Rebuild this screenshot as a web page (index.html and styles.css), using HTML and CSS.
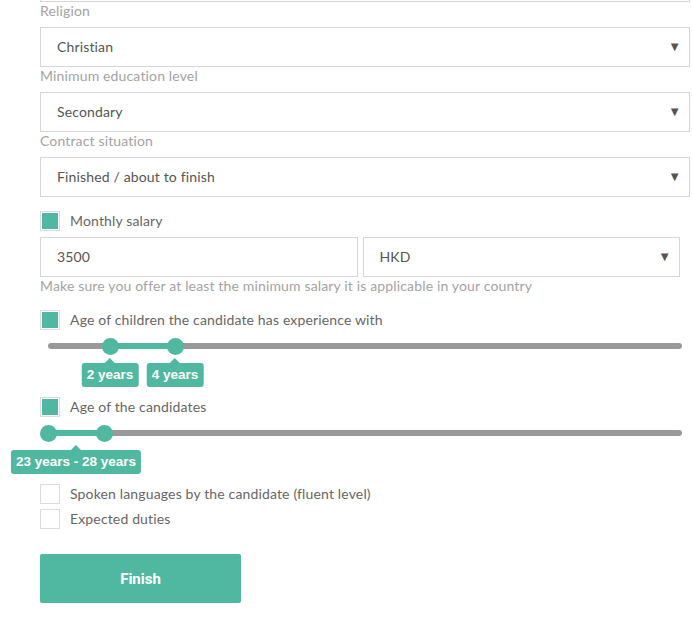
FILE: index.html
```html
<!DOCTYPE html>
<html>
<head>
<meta charset="utf-8">
<link rel="stylesheet" href="styles.css">
</head>
<body>
<form class="form">
  <div class="box prev-box"></div>
  <div class="label">Religion</div>
  <div class="box select"><span>Christian</span><span class="arrow">▼</span></div>
  <div class="label">Minimum education level</div>
  <div class="box select"><span>Secondary</span><span class="arrow">▼</span></div>
  <div class="label">Contract situation</div>
  <div class="box select"><span>Finished / about to finish</span><span class="arrow">▼</span></div>

  <div class="check-row first-check"><span class="check on"></span><span class="check-text">Monthly salary</span></div>
  <div class="pair">
    <div class="box input"><span>3500</span></div>
    <div class="box select"><span>HKD</span><span class="arrow">▼</span></div>
  </div>
  <div class="label hint">Make sure you offer at least the minimum salary it is applicable in your country</div>

  <div class="check-row after-hint"><span class="check on"></span><span class="check-text">Age of children the candidate has experience with</span></div>
  <div class="slider">
    <div class="track"></div>
    <div class="fill" style="left:62px;width:65px"></div>
    <div class="handle" style="left:62px"></div>
    <div class="handle" style="left:127px"></div>
    <div class="tip" style="left:62px">2 years</div>
    <div class="tip" style="left:127px">4 years</div>
  </div>

  <div class="check-row"><span class="check on"></span><span class="check-text">Age of the candidates</span></div>
  <div class="slider">
    <div class="track"></div>
    <div class="fill" style="left:0px;width:56px"></div>
    <div class="handle" style="left:0px"></div>
    <div class="handle" style="left:56px"></div>
    <div class="tip" style="left:28px">23 years - 28 years</div>
  </div>

  <div class="check-row"><span class="check"></span><span class="check-text">Spoken languages by the candidate (fluent level)</span></div>
  <div class="check-row tight"><span class="check"></span><span class="check-text">Expected duties</span></div>

  <button type="button" class="finish">Finish</button>
</form>
</body>
</html>
```

FILE: styles.css
```css
html, body {
  margin: 0;
  padding: 0;
  background: #ffffff;
}
body {
  font-family: Lato, "Open Sans", sans-serif;
  font-size: 14px;
  letter-spacing: 0.15px;
  color: #555555;
  overflow: hidden;
}
.form {
  padding-left: 40px;
  width: 650px;
  margin-top: -38px;
}
.box {
  box-sizing: border-box;
  border: 1px solid #d6d6d6;
  height: 40px;
  background: #fff;
}
.prev-box {
  height: 40px;
}
.label {
  color: #a3a3a3;
  line-height: 18px;
  margin-bottom: 7px;
}
.select, .input {
  display: flex;
  align-items: center;
  justify-content: space-between;
  padding: 0 8px 2px 16px;
  color: #555555;
}
.arrow {
  font-size: 13px;
  color: #555555;
  letter-spacing: 0;
}
.check-row {
  display: flex;
  align-items: center;
  gap: 10px;
  height: 20px;
  color: #666666;
}
.check-text {
  margin-top: -2px;
}
.first-check {
  margin-top: 14px;
  margin-bottom: 6px;
}
.after-hint {
  margin-top: 15px;
}
.check {
  box-sizing: border-box;
  width: 20px;
  height: 20px;
  border: 1px solid #dcdcdc;
  padding: 1px;
  background-clip: content-box;
}
.check.on {
  background-color: #50b8a0;
}
.pair {
  display: grid;
  grid-template-columns: 1fr 1fr;
  gap: 5px;
  width: 640px;
}
.pair .box {
  height: 40px;
}
.hint {
  margin-bottom: 0;
}
.slider {
  position: relative;
  margin-left: 8px;
  width: 634px;
  height: 67px;
}
.track {
  position: absolute;
  left: 0;
  right: 0;
  top: 13px;
  height: 6px;
  border-radius: 3px;
  background: #999999;
}
.fill {
  position: absolute;
  top: 13px;
  height: 6px;
  background: #50b8a0;
}
.handle {
  position: absolute;
  top: 8px;
  width: 17px;
  height: 17px;
  margin-left: -8px;
  border-radius: 50%;
  background: #50b8a0;
}
.tip {
  position: absolute;
  top: 33px;
  transform: translateX(-50%);
  white-space: nowrap;
  height: 24px;
  line-height: 24px;
  padding: 0 5px;
  border-radius: 3px;
  background: #50b8a0;
  color: #ffffff;
  font-family: "Liberation Sans", Arial, sans-serif;
  font-weight: bold;
  font-size: 13.5px;
  letter-spacing: 0;
}
.tip::before {
  content: "";
  position: absolute;
  left: 50%;
  top: -5px;
  margin-left: -5px;
  border-left: 5px solid transparent;
  border-right: 5px solid transparent;
  border-bottom: 5px solid #50b8a0;
}
.tight {
  margin-top: 5px;
}
.finish {
  display: block;
  margin-top: 25px;
  width: 201px;
  height: 49px;
  border: none;
  border-radius: 2px;
  background: #50b8a0;
  color: #ffffff;
  font-family: Roboto, "Liberation Sans", sans-serif;
  font-weight: bold;
  font-size: 15px;
  letter-spacing: 0;
  cursor: pointer;
}
```
